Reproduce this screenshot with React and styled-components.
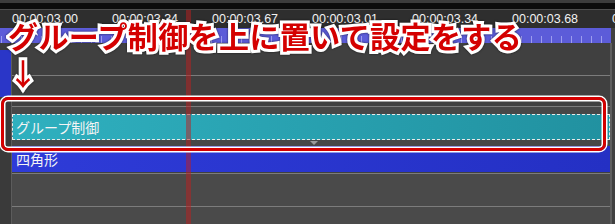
import React from "react";
import styled, { createGlobalStyle } from "styled-components";

const GlobalStyle = createGlobalStyle`
  html, body {
    margin: 0;
    padding: 0;
    background: #404040;
  }
`;

const Frame = styled.div`
  position: relative;
  width: 615px;
  height: 224px;
  overflow: hidden;
  background: #404040;
  font-family: "Noto Sans CJK JP", "Noto Sans", sans-serif;
`;

const TopStrip = styled.div`
  height: 3px;
  background: #3c3c3c;
`;

const BlackBand = styled.div`
  height: 6px;
  background: #0c0c0c;
  border-bottom: 1px solid #4e4e4e;
`;

const Ruler = styled.div`
  display: flex;
  height: 18px;
  padding-left: 12px;
  background: #2e2e2e;
`;

const TimeLabel = styled.span`
  flex: 0 0 100px;
  font-family: "Liberation Sans", Arial, sans-serif;
  font-size: 12.5px;
  line-height: 19px;
  color: #f2f2f2;
  white-space: nowrap;
`;

const RulerBand = styled.div`
  height: 15px;
  width: 611px;
  background-color: #5c5cd9;
  background-image: repeating-linear-gradient(
    to right,
    transparent 0,
    transparent 1px,
    rgba(210, 210, 255, 0.55) 1px,
    rgba(210, 210, 255, 0.55) 2px,
    transparent 2px,
    transparent 10px
  );
  background-size: 100% 7px;
  background-position: 0 100%;
  background-repeat: repeat-x;
`;

const Body = styled.div`
  display: flex;
  height: 181px;
`;

const LeftCol = styled.div`
  display: flex;
  flex-direction: column;
  flex: 0 0 11px;
  background: #3a3a3a;
  border-right: 1px solid #5c5c5c;
`;

const LeftBlock = styled.div`
  margin-top: 7px;
  height: 47px;
  width: 11px;
  background: #2a36c8;
`;

const Tracks = styled.div`
  display: flex;
  flex-direction: column;
  width: 598px;
  border-right: 2px solid #5e5e5e;
`;

const Row = styled.div`
  position: relative;
  height: ${(p) => p.$h}px;
  background: ${(p) => p.$bg || "#404040"};
  border-bottom: ${(p) => (p.$line ? "1px solid #7c7c7c" : "none")};
  flex: ${(p) => (p.$fill ? "1" : "0 0 auto")};
`;

const GroupLayer = styled.div`
  display: flex;
  flex-direction: column;
  height: 39px;
  padding-top: 7px;
  box-sizing: border-box;
  background: #474747;
`;

const Clip = styled.div`
  display: flex;
  align-items: center;
  height: 26px;
  box-sizing: border-box;
  padding-left: ${(p) => (p.$dashed ? 3 : 4)}px;
  color: #f4f4f4;
  font-size: 14px;
  white-space: nowrap;
  background: ${(p) => p.$bg};
  border: ${(p) => (p.$dashed ? "1px dashed #e8e8e8" : "none")};
`;

const MarkerStrip = styled.div`
  display: flex;
  justify-content: flex-start;
  height: 6px;
  padding-left: 298px;
`;

const Marker = styled.div`
  width: 0;
  height: 0;
  margin-top: 1px;
  border-left: 4px solid transparent;
  border-right: 4px solid transparent;
  border-top: 4px solid #9a9a9a;
`;

const Playhead = styled.div`
  position: absolute;
  left: 186px;
  top: 10px;
  bottom: 0;
  width: 5px;
  background: rgba(190, 30, 30, 0.5);
`;

const Callout = styled.div`
  position: absolute;
  left: 8px;
  top: 17px;
  color: #d40000;
  font-family: "Noto Sans CJK JP", sans-serif;
  font-size: 30px;
  font-weight: 700;
  line-height: 37px;
  letter-spacing: 0.4px;
  white-space: pre;
  -webkit-text-stroke: 6px #ffffff;
  paint-order: stroke fill;
  filter: drop-shadow(0 0 1px rgba(0, 0, 0, 0.6));
`;

const ArrowLine = styled.div`
  font-weight: 500;
`;

const HighlightBox = styled.div`
  position: absolute;
  left: 1px;
  top: 97px;
  width: 605px;
  height: 54px;
  box-sizing: border-box;
  border: 3.5px solid #d40000;
  border-radius: 7px;
  box-shadow: 0 0 0 1.5px #ffffff, inset 0 0 0 1.5px #ffffff;
`;

const labels = [
  "00:00:03.00",
  "00:00:03.34",
  "00:00:03.67",
  "00:00:03.01",
  "00:00:03.34",
  "00:00:03.68",
  "00:00:04.01",
];

export default function App() {
  return (
    <>
      <GlobalStyle />
      <Frame>
        <TopStrip />
        <BlackBand />
        <Ruler>
          {labels.map((t, i) => (
            <TimeLabel key={i}>{t}</TimeLabel>
          ))}
        </Ruler>
        <RulerBand />
        <Body>
          <LeftCol>
            <LeftBlock />
          </LeftCol>
          <Tracks>
            <Row $h={32} $line />
            <Row $h={30} $line />
            <GroupLayer>
              <Clip $dashed $bg="linear-gradient(to right, #2fb0bf, #2191a0)">
                グループ制御
              </Clip>
              <MarkerStrip>
                <Marker />
              </MarkerStrip>
            </GroupLayer>
            <Row $h={27} $line $bg="#404040">
              <Clip $bg="linear-gradient(to right, #2e3bd8, #2430c4)">四角形</Clip>
            </Row>
            <Row $h={32} $line $bg="#4a4a4a" />
            <Row $fill $bg="#4a4a4a" />
          </Tracks>
        </Body>
        <Playhead />
        <HighlightBox />
        <Callout>
          グループ制御を上に置いて設定をする
          <ArrowLine>↓</ArrowLine>
        </Callout>
      </Frame>
    </>
  );
}
